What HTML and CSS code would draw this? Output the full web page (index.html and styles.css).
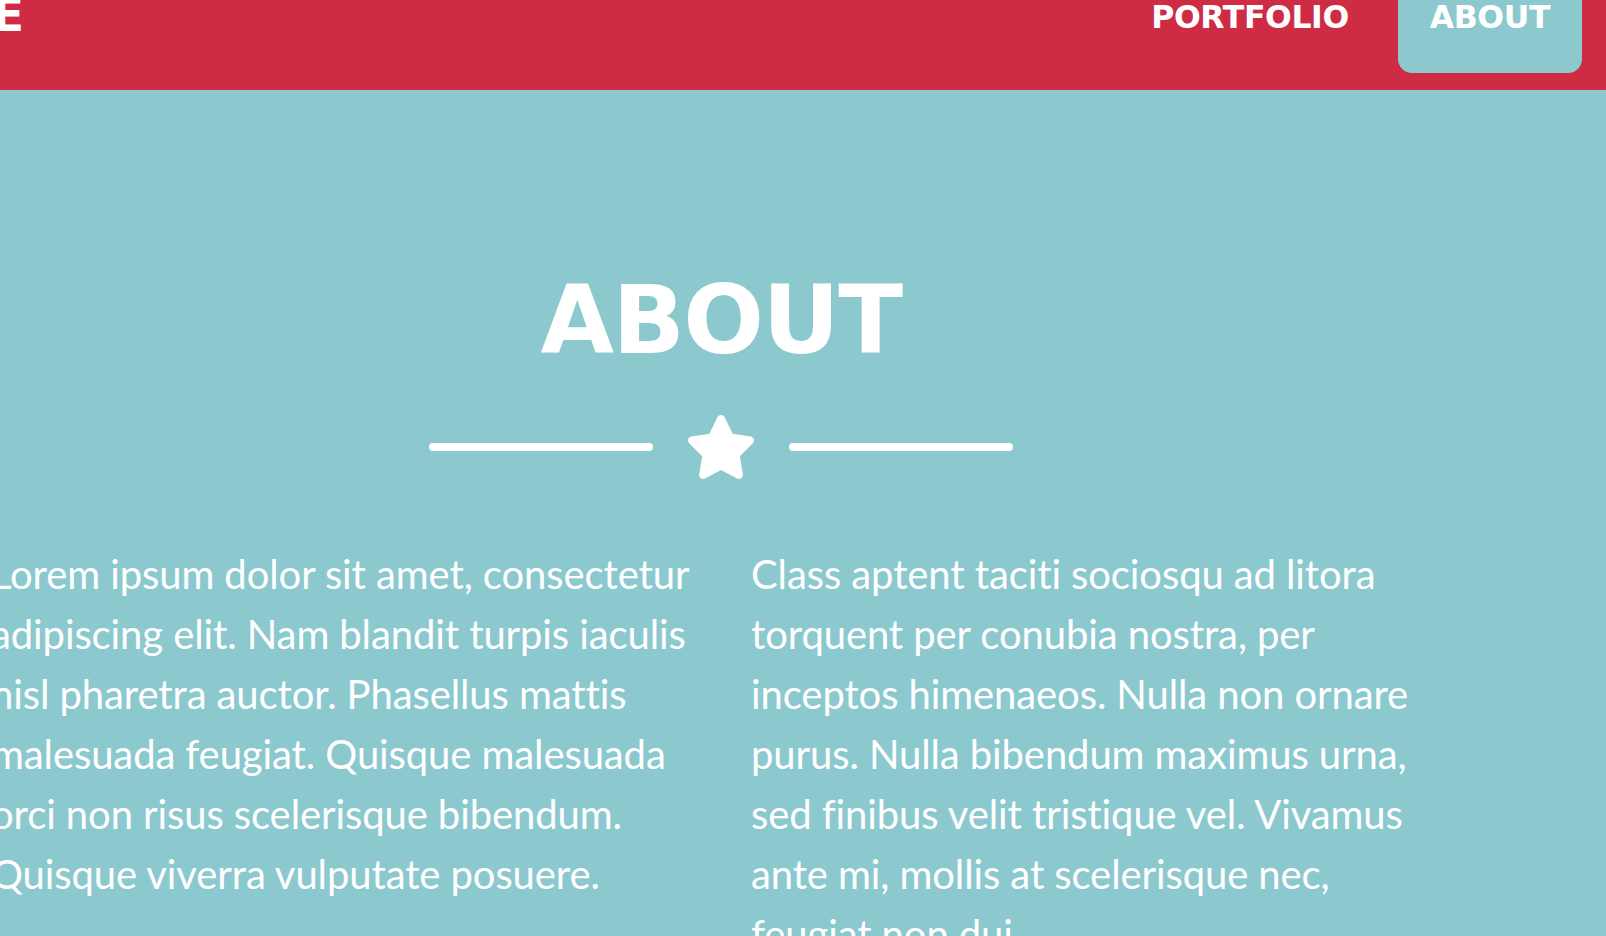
FILE: index.html
```html
<!DOCTYPE html>
<html lang="en">
<head>
<meta charset="utf-8">
<title>About</title>
<link rel="stylesheet" href="styles.css">
</head>
<body>
  <nav class="navbar">
    <a class="brand" href="#"><span class="brand-text">FREELANCE</span></a>
    <ul class="nav-links">
      <li><a class="nav-link" href="#portfolio">PORTFOLIO</a></li>
      <li><a class="nav-link active" href="#about">ABOUT</a></li>
    </ul>
  </nav>
  <section class="about">
    <div class="container">
      <h2 class="about-title">ABOUT</h2>
      <div class="divider">
        <span class="divider-line"></span>
        <svg class="divider-star" viewBox="25 0 526 512" width="66" height="64" aria-hidden="true"><path fill="#fff" d="M316.9 18C311.6 7 300.4 0 288.1 0s-23.4 7-28.8 18L195 150.3 51.4 171.5c-12 1.8-22 10.2-25.7 21.7s-.7 24.2 7.9 32.7L137.8 329 113.2 474.7c-2 12 3 24.2 12.9 31.3s23 8 33.8 2.3l128.3-68.5 128.3 68.5c10.8 5.7 23.9 4.9 33.8-2.3s14.9-19.3 12.9-31.3L438.5 329 542.7 225.9c8.6-8.5 11.7-21.2 7.9-32.7s-13.7-19.9-25.7-21.7L381.2 150.3 316.9 18z"/></svg>
        <span class="divider-line"></span>
      </div>
      <div class="row">
        <div class="col col-left">
          <p>Lorem ipsum dolor sit amet, consectetur adipiscing elit. Nam blandit turpis iaculis nisl pharetra auctor. Phasellus mattis malesuada feugiat. Quisque malesuada orci non risus scelerisque bibendum. Quisque viverra vulputate posuere.</p>
        </div>
        <div class="col col-right">
          <p>Class aptent taciti sociosqu ad litora torquent per conubia nostra, per inceptos himenaeos. Nulla non ornare purus. Nulla bibendum maximus urna, sed finibus velit tristique vel. Vivamus ante mi, mollis at scelerisque nec, feugiat non dui.</p>
        </div>
      </div>
    </div>
  </section>
</body>
</html>
```
FILE: styles.css
```css
html, body {
  margin: 0;
  padding: 0;
}
body {
  width: 1606px;
  height: 936px;
  overflow: hidden;
  background: #8cc9cf;
  color: #fff;
  font-family: "Lato", "Liberation Sans", sans-serif;
}

.navbar {
  height: 90px;
  background: #ce2c45;
  display: flex;
  align-items: flex-start;
  justify-content: space-between;
  overflow: hidden;
}
.brand {
  width: 24px;
  height: 48px;
  margin-top: -9px;
  overflow: hidden;
  display: flex;
  justify-content: flex-end;
  text-decoration: none;
  color: #fff;
}
.brand-text {
  font-family: "DejaVu Sans", sans-serif;
  font-weight: 700;
  font-size: 47px;
  line-height: 48px;
  white-space: nowrap;
}
.nav-links {
  list-style: none;
  margin: 0 24px 0 0;
  padding: 0;
  display: flex;
  gap: 17px;
}
.nav-link {
  display: block;
  margin-top: -3px;
  padding: 0 32px 36px;
  font-family: "DejaVu Sans", sans-serif;
  font-weight: 700;
  font-size: 31.5px;
  line-height: 40px;
  letter-spacing: -0.4px;
  color: #fff;
  text-decoration: none;
  border-radius: 0 0 14px 14px;
}
.nav-link.active {
  background: #8cc9cf;
}

.about {
  padding-top: 183px;
}
.container {
  width: 1442px;
}
.about-title {
  margin: 0;
  text-align: center;
  font-family: "DejaVu Sans", sans-serif;
  font-weight: 700;
  font-size: 95px;
  line-height: 95px;
  letter-spacing: -1.5px;
}
.divider {
  margin-top: 47px;
  height: 64px;
  display: flex;
  align-items: center;
  justify-content: center;
  gap: 35px;
}
.divider-line {
  width: 224px;
  height: 8px;
  border-radius: 4px;
  background: #fff;
}
.divider-star {
  display: block;
}
.row {
  margin-top: 65px;
  margin-left: -39px;
  display: flex;
}
.col {
  flex: 0 0 760px;
  box-sizing: border-box;
  padding: 0 30px;
}
.col-left {
  padding-right: 20px;
}
.col-right {
  padding-right: 35px;
}
.col p {
  margin: 0;
  font-size: 40px;
  line-height: 60px;
  letter-spacing: -0.1px;
  font-variant-ligatures: no-common-ligatures;
}
```
